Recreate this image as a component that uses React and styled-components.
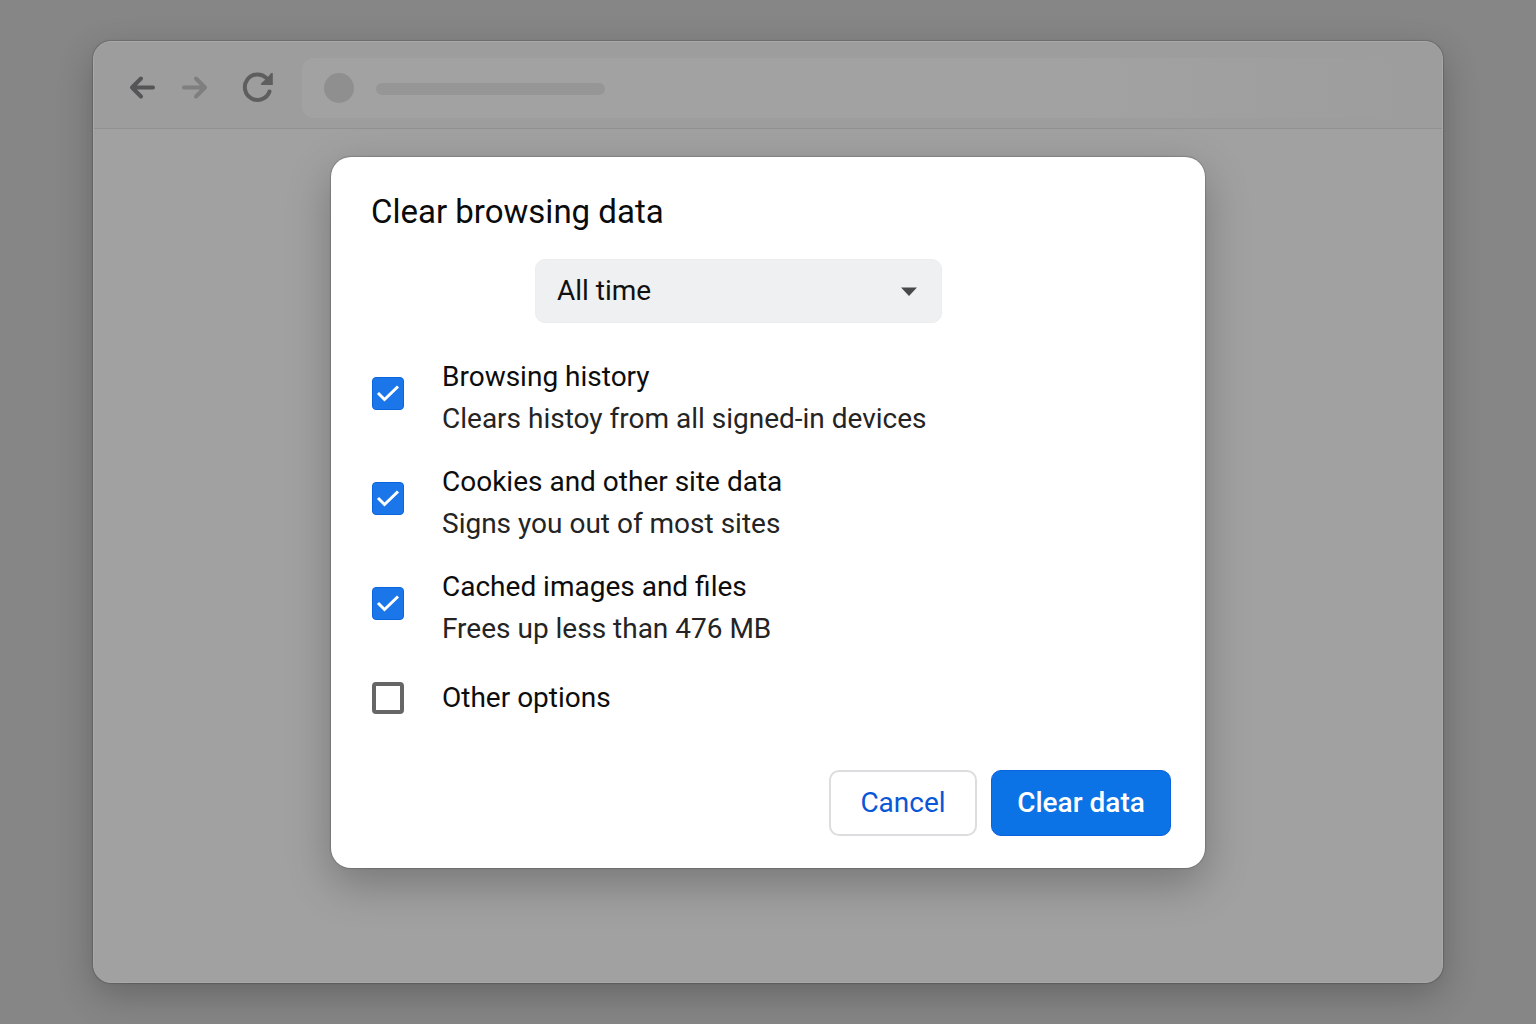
import { useState } from "react"
import styled, { createGlobalStyle } from "styled-components"

const OPTIONS = [
    { id: "history", title: "Browsing history", detail: "Clears histoy from all signed-in devices", checked: true },
    { id: "cookies", title: "Cookies and other site data", detail: "Signs you out of most sites", checked: true },
    { id: "cache", title: "Cached images and files", detail: "Frees up less than 476 MB", checked: true },
    { id: "other", title: "Other options", checked: false },
]

export default function App() {
    return <>
        <GlobalStyle />
        <Page>
            <BrowserWindow>
                <Toolbar />
                <Content>
                    <ClearDataDialog />
                </Content>
            </BrowserWindow>
        </Page>
    </>
}

function Toolbar() {
    return <Bar>
        <NavButton type="button" aria-label="Back" $color="#555557">
            <svg width="28" height="26" viewBox="0 0 28 26" fill="none" stroke="currentColor" strokeWidth="4" strokeLinecap="round" strokeLinejoin="round">
                <path d="M25 12.500H4M13 3.500L4 12.500l9 9" />
            </svg>
        </NavButton>
        <NavButton type="button" aria-label="Forward" $color="#7f7f7f">
            <svg width="28" height="26" viewBox="0 0 28 26" fill="none" stroke="currentColor" strokeWidth="4" strokeLinecap="round" strokeLinejoin="round">
                <path d="M3 12.500h21M15 3.500l9 9-9 9" />
            </svg>
        </NavButton>
        <ReloadButton type="button" aria-label="Reload" $color="#5e5e5e">
            <svg width="32" height="32" viewBox="0 0 32 32" fill="none">
                <path d="M27.500 19.500A12.700 12.700 0 1 1 24.500 6.200" stroke="currentColor" strokeWidth="4" strokeLinecap="round" />
                <path d="M29 1.200q1.700-1.200 1.800.6v11.200h-11q-1.800-.3-.6-1.700l5-4.600Z" fill="currentColor" />
            </svg>
        </ReloadButton>
        <AddressBar>
            <SiteIcon />
            <AddressLine />
        </AddressBar>
    </Bar>
}

function ClearDataDialog() {
    const [range, setRange] = useState("all")
    const [options, setOptions] = useState(OPTIONS)

    const toggle = (id) => {
        setOptions(options.map(o => o.id === id ? { ...o, checked: !o.checked } : o))
    }

    return <Dialog role="dialog" aria-labelledby="dialog-title">
        <Title id="dialog-title">Clear browsing data</Title>
        <SelectWrapper>
            <RangeSelect aria-label="Time range" value={range} onChange={e => setRange(e.target.value)}>
                <option value="hour">Last hour</option>
                <option value="day">Last 24 hours</option>
                <option value="week">Last 7 days</option>
                <option value="all">All time</option>
            </RangeSelect>
            <Caret width="18" height="10" viewBox="0 0 18 10" aria-hidden="true">
                <path d="M1 .5h16L9 9Z" fill="#48494b" />
            </Caret>
        </SelectWrapper>
        <OptionList>
            {options.map(option => (
                <Option key={option.id} $single={!option.detail}>
                    <CheckboxWrapper>
                        <Checkbox type="checkbox" checked={option.checked} onChange={() => toggle(option.id)} />
                        {option.checked && <Tick viewBox="0 0 32 33" aria-hidden="true">
                            <path d="M6 16l6.500 6.500L26 9.500" />
                        </Tick>}
                    </CheckboxWrapper>
                    <OptionText>
                        <span>{option.title}</span>
                        {option.detail && <Detail>{option.detail}</Detail>}
                    </OptionText>
                </Option>
            ))}
        </OptionList>
        <Actions>
            <CancelButton type="button">Cancel</CancelButton>
            <ClearButton type="button">Clear data</ClearButton>
        </Actions>
    </Dialog>
}

const GlobalStyle = createGlobalStyle`
    * {
        box-sizing: border-box;
    }

    body {
        margin: 0;
        font-family: Roboto, "Liberation Sans", sans-serif;
        background-color: #868686;
    }
`

const Page = styled.div`
    display: flex;
    min-height: 100vh;
    padding: 41px 93px;
`

const BrowserWindow = styled.div`
    flex: 1;
    display: flex;
    flex-direction: column;
    overflow: hidden;
    border: 1px solid #a9a9a9;
    border-radius: 18px;
    background-color: #a1a1a1;
    box-shadow: 0 0 1px 1px rgba(0, 0, 0, 0.16), 0 12px 36px rgba(0, 0, 0, 0.24);
`

const Bar = styled.header`
    display: flex;
    align-items: center;
    padding: 16px 34px 10px;
    border-bottom: 1px solid #919191;
    background-color: #9d9d9d;
`

const NavButton = styled.button`
    display: flex;
    margin-right: 25px;
    padding: 0;
    border: none;
    background: none;
    color: ${props => props.$color};
    cursor: pointer;
`

const ReloadButton = styled(NavButton)`
    margin-left: 8px;
    margin-right: 28px;
`

const AddressBar = styled.div`
    flex: 1;
    display: flex;
    align-items: center;
    gap: 22px;
    height: 60px;
    padding-left: 22px;
    border-radius: 12px;
    background: linear-gradient(to right, #a2a2a2 70%, #9d9d9d);
`

const SiteIcon = styled.span`
    width: 30px;
    height: 30px;
    border-radius: 50%;
    background-color: #8f8f8f;
`

const AddressLine = styled.span`
    width: 229px;
    height: 12px;
    margin-top: 2px;
    border-radius: 6px;
    background-color: #969696;
`

const Content = styled.main`
    flex: 1;
    display: flex;
    justify-content: center;
    align-items: flex-start;
    padding: 28px 24px;
`

const Dialog = styled.section`
    width: 100%;
    max-width: 874px;
    padding: 33px 34px 32px 40px;
    border-radius: 20px;
    background-color: white;
    box-shadow: 0 0 1px 1px rgba(0, 0, 0, 0.16), 0 16px 44px rgba(0, 0, 0, 0.26);
`

const Title = styled.h1`
    margin: 0;
    font-size: 33px;
    font-weight: 400;
    line-height: 44px;
    color: #0b0b0b;
`

const SelectWrapper = styled.div`
    position: relative;
    width: 407px;
    margin: 25px 0 33px 164px;
`

const RangeSelect = styled.select`
    display: block;
    appearance: none;
    width: 100%;
    height: 64px;
    padding: 0 21px 2px;
    border: 1px solid #ebedef;
    border-radius: 10px;
    background-color: #eff0f2;
    font-family: inherit;
    font-size: 28px;
    color: #111;
`

const Caret = styled.svg`
    position: absolute;
    top: 28px;
    right: 24px;
    pointer-events: none;
`

const OptionList = styled.div`
    display: flex;
    flex-direction: column;
    gap: 21px;
`

const Option = styled.label`
    display: flex;
    align-items: ${props => props.$single ? "center" : "flex-start"};
    gap: 38px;
    padding: ${props => props.$single ? "6px 0 0 1px" : "0 0 0 1px"};
    font-size: 28px;
    line-height: 42px;
    color: #0d0d0d;

    > :first-child {
        margin-top: ${props => props.$single ? "0" : "21px"};
    }
`

const CheckboxWrapper = styled.span`
    position: relative;
    display: flex;
`

const Checkbox = styled.input`
    appearance: none;
    width: 32px;
    height: 32px;
    margin: 0;
    border: 4px solid #666;
    border-radius: 4px;
    background-color: white;

    &:checked {
        height: 33px;
        border: 1px solid #0b66de;
        background-color: #1b76ea;
    }
`

const Tick = styled.svg`
    position: absolute;
    inset: 0;
    fill: none;
    stroke: white;
    stroke-width: 3;
    pointer-events: none;
`

const OptionText = styled.span`
    display: flex;
    flex-direction: column;
`

const Detail = styled.span`
    color: #242424;
`

const Actions = styled.div`
    display: flex;
    justify-content: flex-end;
    gap: 14px;
    margin-top: 51px;
`

const Button = styled.button`
    height: 66px;
    padding: 0 0 2px;
    border-radius: 10px;
    font-family: inherit;
    font-size: 28px;
    cursor: pointer;
`

const CancelButton = styled(Button)`
    width: 148px;
    border: 2px solid #dcddde;
    background-color: white;
    color: #0957d6;
`

const ClearButton = styled(Button)`
    width: 180px;
    border: 1px solid #0a62dc;
    background-color: #0b73e5;
    font-weight: 500;
    color: white;
`
